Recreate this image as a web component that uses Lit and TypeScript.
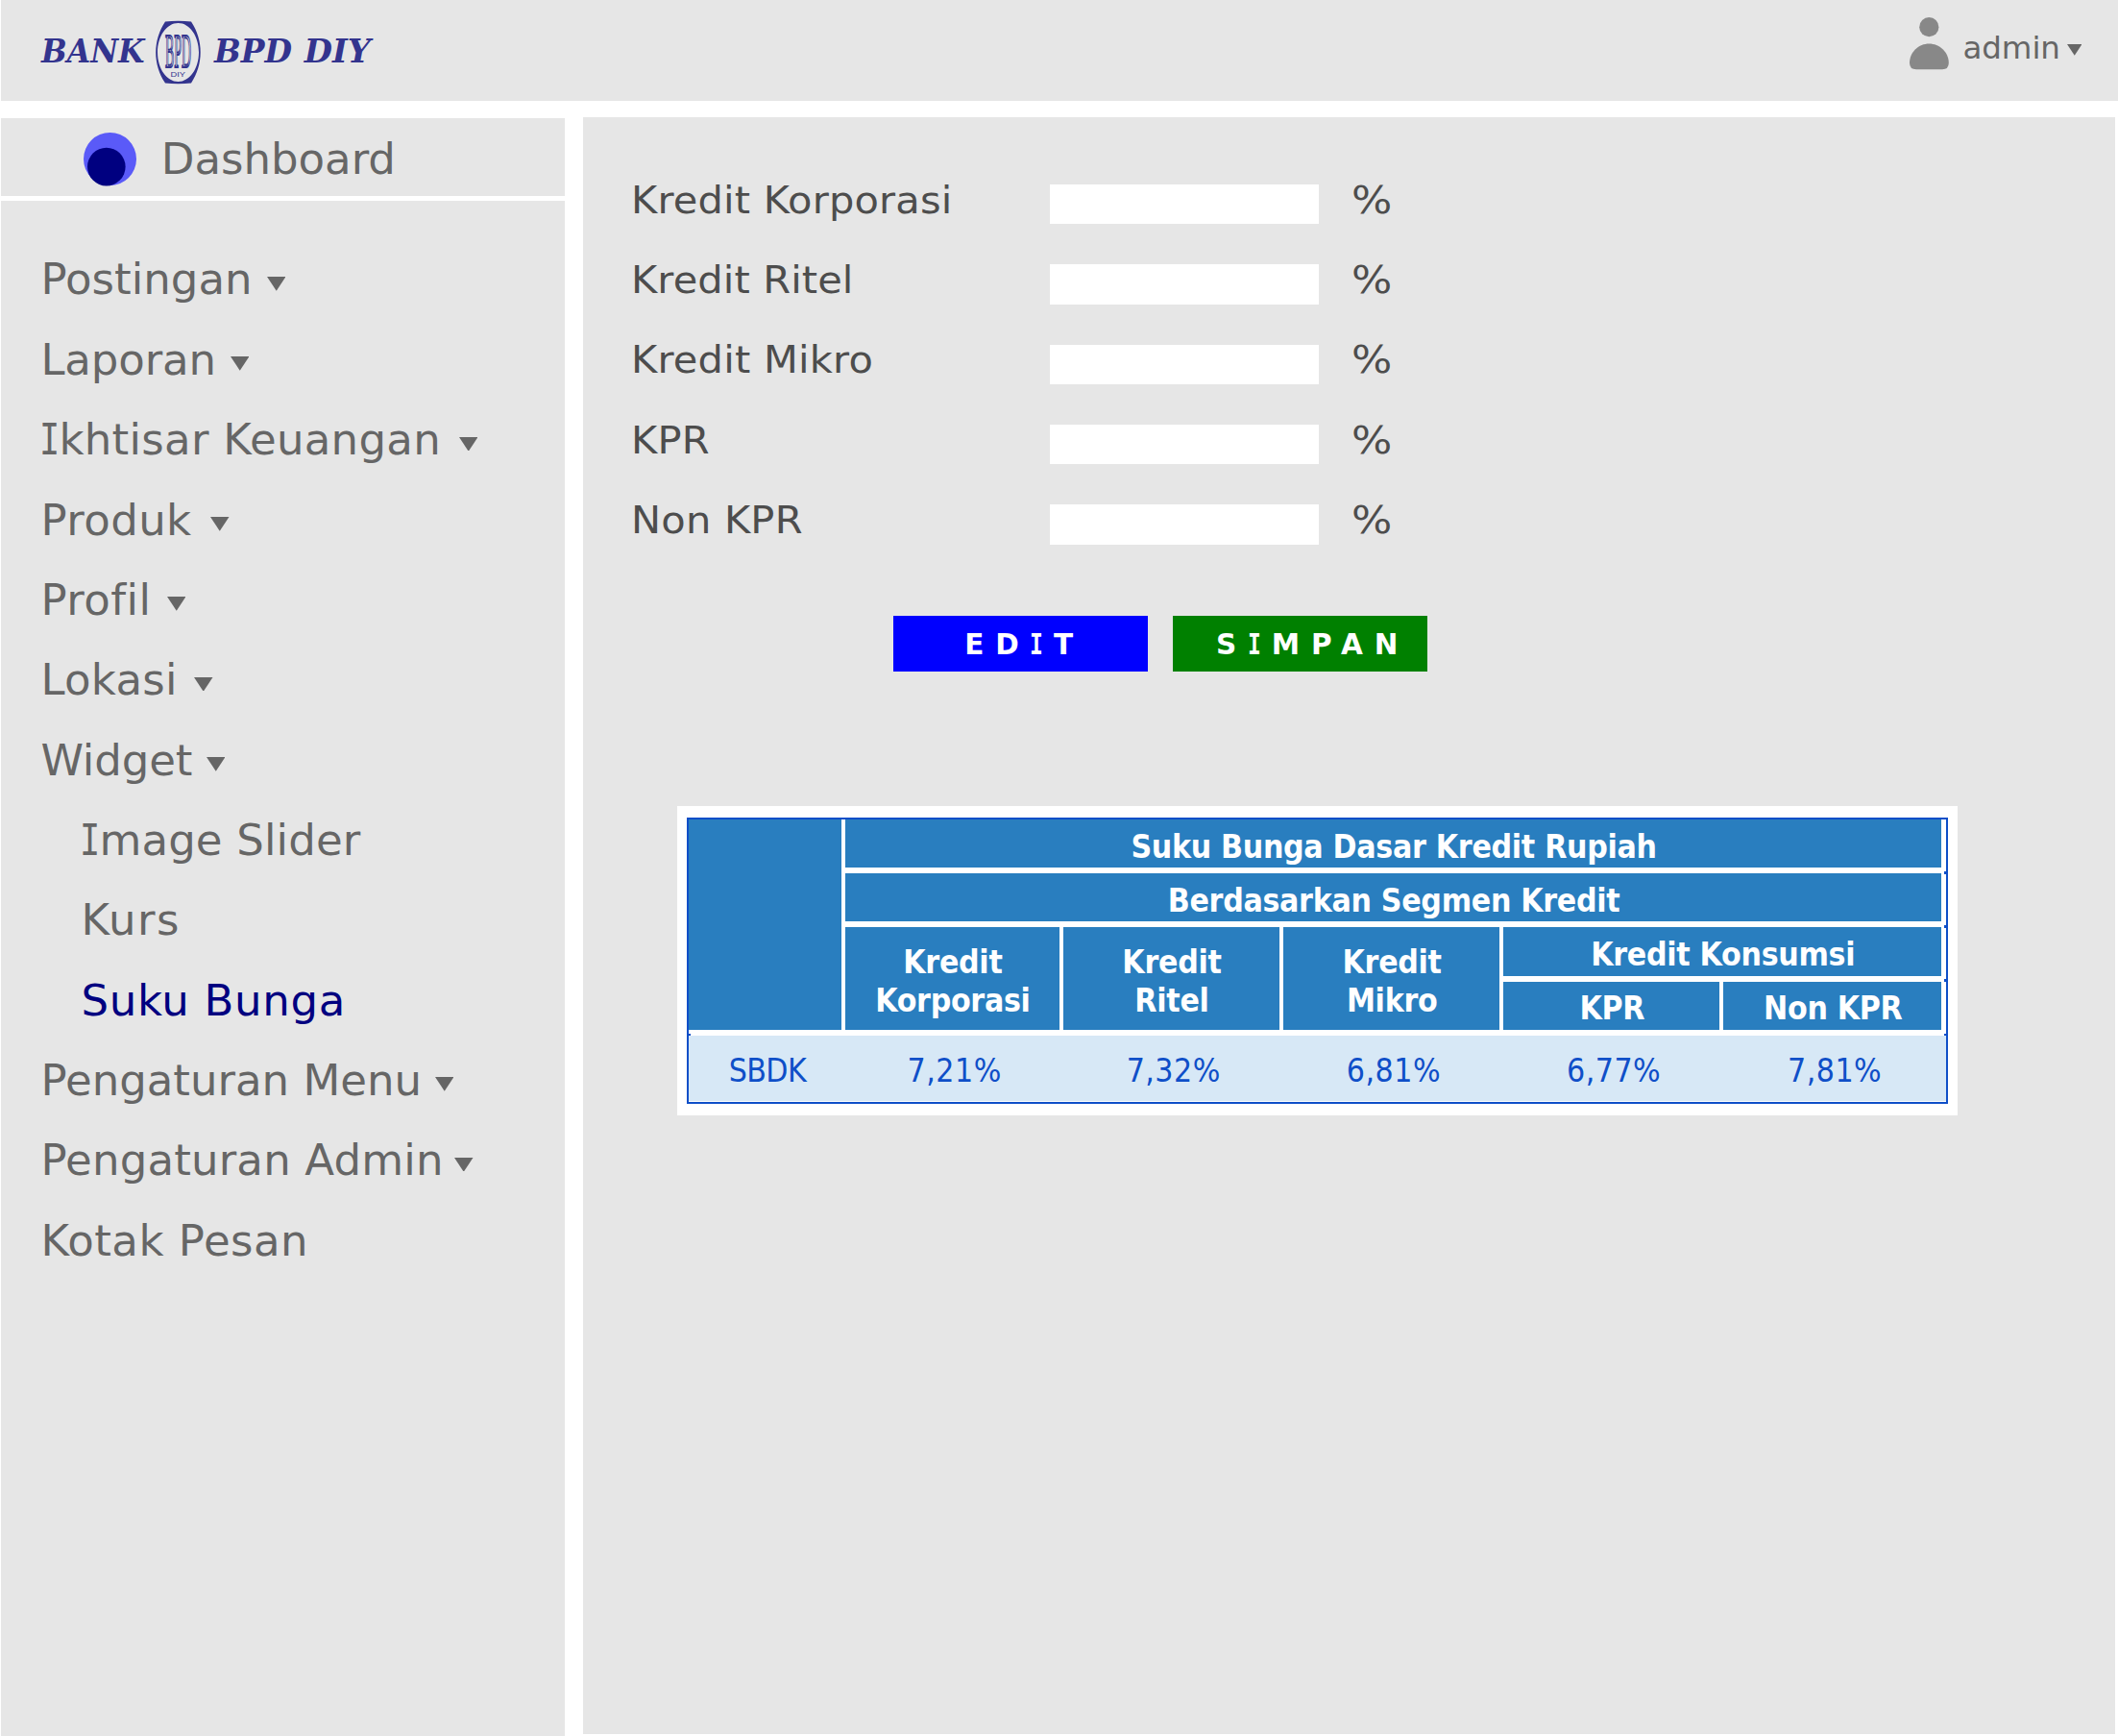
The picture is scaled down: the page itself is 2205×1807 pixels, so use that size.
import { LitElement, html, css } from "lit";

interface MenuItem {
  label: string;
  spacing: number;
  arrow?: number;
  sub?: boolean;
  active?: boolean;
}

const MENU: MenuItem[] = [
  { label: "Postingan", spacing: 0.05, arrow: 277.6 },
  { label: "Laporan", spacing: -0.12, arrow: 240 },
  { label: "Ikhtisar Keuangan", spacing: 0.3, arrow: 477.7 },
  { label: "Produk", spacing: 0.45, arrow: 219.5 },
  { label: "Profil", spacing: 0.47, arrow: 173.6 },
  { label: "Lokasi", spacing: 0.32, arrow: 202.5 },
  { label: "Widget", spacing: -0.1, arrow: 215 },
  { label: "Image Slider", spacing: 0.17, sub: true },
  { label: "Kurs", spacing: 1.4, sub: true },
  { label: "Suku Bunga", spacing: 0.7, sub: true, active: true },
  { label: "Pengaturan Menu", spacing: 0.01, arrow: 452.8 },
  { label: "Pengaturan Admin", spacing: 0.18, arrow: 473.3 },
  { label: "Kotak Pesan", spacing: 0.51 },
];

const FIELDS = [
  { label: "Kredit Korporasi", spacing: 0.17 },
  { label: "Kredit Ritel", spacing: 0.1 },
  { label: "Kredit Mikro", spacing: 0.2 },
  { label: "KPR", spacing: 0.2 },
  { label: "Non KPR", spacing: 0.2 },
];

const RATES = ["SBDK", "7,21%", "7,32%", "6,81%", "6,77%", "7,81%"];

/* Capital I is set with slab serifs throughout the interface. */
const slab = (text: string) =>
  text.split(/(I)/).filter(Boolean).map((p) => (p === "I" ? html`<span class="slab">I</span>` : p));

const arrow = (w: number, h: number) =>
  html`<svg class="arrow" width=${w} height=${h} viewBox="0 0 20 15" preserveAspectRatio="none">
    <path d="M0 0H20L10 15Z" fill="#666" />
  </svg>`;

class AppRoot extends LitElement {
  static styles = css`
    :host {
      display: block;
      width: 2205px;
      height: 1807px;
      overflow: hidden;
      background: #fff;
      font-family: "DejaVu Sans", Verdana, sans-serif;
      color: #666;
    }
    svg { display: block; flex: none; }
    .header {
      box-sizing: border-box;
      height: 105px;
      margin-left: 1px;
      padding-right: 38px;
      background: #e6e6e6;
      display: flex;
      justify-content: space-between;
    }
    .user { display: flex; align-items: flex-start; }
    .user-icon { margin-top: 17.6px; }
    .name {
      width: 108px;
      margin-left: 15px;
      font-size: 32.5px;
      line-height: 101.6px;
      letter-spacing: -0.1px;
    }
    .user .arrow { margin-top: 46px; }
    .body { display: flex; }
    .side { width: 587px; margin: 18px 0 0 1px; flex: none; }
    .dashboard {
      box-sizing: border-box;
      height: 80.6px;
      padding: 5.9px 0 0 86px;
      background: #e6e6e6;
      display: flex;
      align-items: center;
      gap: 25.8px;
      font-size: 45px;
      line-height: 60px;
    }
    .menu {
      box-sizing: border-box;
      height: 1598px;
      margin-top: 5.7px;
      padding: 40.2px 0 0 41.4px;
      background: #e6e6e6;
    }
    .item {
      height: 83.35px;
      display: flex;
      font-size: 45px;
      line-height: 83.35px;
      white-space: pre;
    }
    .item .arrow { margin-top: 38.4px; }
    .sub { padding-left: 42px; }
    .active { color: #000080; }
    .slab {
      display: inline-block;
      width: 0.602em;
      margin: 0 -0.09em;
      font-family: "DejaVu Sans Mono", monospace;
      letter-spacing: 0;
      transform: scaleX(0.78);
    }
    .main {
      box-sizing: border-box;
      width: 1595px;
      height: 1683.3px;
      margin: 17px 0 0 18.6px;
      padding: 44.8px 0 0 50.4px;
      background: #e6e6e6;
    }
    .field {
      height: 83.35px;
      display: grid;
      grid-template-columns: 436px 280.3px auto;
      align-items: center;
      font-size: 39.4px;
      line-height: 83.35px;
      color: #4d4d4d;
      white-space: pre;
    }
    .label { justify-self: start; transform: scaleX(1.055); transform-origin: left; }
    .input { height: 41.3px; margin-top: 8.6px; background: #fff; }
    .percent {
      justify-self: start;
      margin-left: 34px;
      transform: scaleX(1.13);
      transform-origin: left;
    }
    .actions { display: flex; gap: 26.5px; margin: 57.2px 0 0 273px; }
    .btn {
      box-sizing: border-box;
      width: 265px;
      height: 58.2px;
      padding-top: 1.7px;
      color: #fff;
      font-size: 29.5px;
      font-weight: bold;
      line-height: 58.2px;
      white-space: pre;
    }
    .edit { background: #0000ff; padding-left: 74.2px; letter-spacing: 11.9px; }
    .save { background: #008000; padding-left: 44.6px; letter-spacing: 12px; }
    .btn .slab { margin-right: 9.3px; }
    .card {
      box-sizing: border-box;
      width: 1332.4px;
      height: 322.3px;
      margin: 139.9px 0 0 48.4px;
      padding: 12px 9.8px;
      background: #fff;
    }
    .rates {
      --dot: linear-gradient(#0f4fc8, #0f4fc8);
      box-sizing: border-box;
      height: 298.7px;
      border: 2px solid #0f4fc8;
      background:
        var(--dot) right 0 top 54px / 2px 3px no-repeat,
        var(--dot) right 0 top 110px / 2px 3px no-repeat,
        var(--dot) right 0 top 166px / 2px 3px no-repeat,
        var(--dot) right 0 top 223px / 2px 3px no-repeat,
        var(--dot) left 0 top 223px / 2px 3px no-repeat,
        #fff;
      font-family: "DejaVu Sans Condensed", "DejaVu Sans", Tahoma, sans-serif;
      font-stretch: condensed;
      font-size: 33.5px;
      line-height: 39.8px;
      text-align: center;
    }
    .grid {
      display: grid;
      grid-template-columns: 158.8px 222.9px 225.2px 225.2px 225.2px 226.8px;
      column-gap: 4px;
    }
    .head {
      grid-template-rows: 50.4px 50.4px 50.3px 50.3px;
      row-gap: 5.9px;
      color: #fff;
      font-weight: bold;
      letter-spacing: -0.3px;
    }
    .cell {
      box-sizing: border-box;
      padding: 7.2px 0 0 1px;
      background: #297ebf;
      display: flex;
      align-items: center;
      justify-content: center;
    }
    .corner { grid-row: 1 / 5; }
    .wide { grid-column: 2 / 7; }
    .tall { grid-row: 3 / 5; }
    .pair { grid-column: 5 / 7; }
    .values {
      margin-top: 6px;
      height: 68.4px;
      background: #d7e8f6;
      color: #0f4fc8;
    }
    .value { padding: 17.2px 0 0 4.6px; letter-spacing: 0.5px; }
    .code { letter-spacing: -0.6px; }
  `;

  logo() {
    return html`<svg width="400" height="105" viewBox="1 0 400 105" fill="#33348e">
      <g font-family="DejaVu Serif" font-style="italic" font-weight="bold" font-size="34">
        <text x="43" y="65.3" textLength="107.500" lengthAdjust="spacingAndGlyphs">BANK</text>
        <text x="223" y="65.3" textLength="81" lengthAdjust="spacingAndGlyphs">BPD</text>
        <text x="316.7" y="65.3" textLength="69" lengthAdjust="spacingAndGlyphs">DIY</text>
      </g>
      <path
        fill-rule="evenodd"
        d="M172 22.500Q185.500 20.800 199 22.500C212 42 212 67 199 86.500Q185.500 88 172 86.500C159 67 159 42 172 22.500ZM185.500 24C173.500 24 164 37.700 164 54.500C164 71.300 173.500 85 185.500 85C197.500 85 207 71.300 207 54.500C207 37.700 197.500 24 185.500 24Z"
      />
      <text x="172" y="70" textLength="27" lengthAdjust="spacingAndGlyphs" fill="none" stroke="#33348e" stroke-width="2.200" font-family="Liberation Serif" font-size="50">BPD</text>
      <text x="177.500" y="79.500" textLength="15.500" lengthAdjust="spacingAndGlyphs" font-family="Liberation Sans" font-size="8">DIY</text>
    </svg>`;
  }

  menuItem(m: MenuItem) {
    const width = m.arrow ? `width:${m.arrow - 42.4}px` : "";
    return html`<div class="item ${m.sub ? "sub" : ""} ${m.active ? "active" : ""}"><span style=${`letter-spacing:${m.spacing}px;${width}`}>${slab(m.label)}</span>${m.arrow ? arrow(19.5, 14.8) : ""}</div>`;
  }

  render() {
    return html`
      <div class="header">
        ${this.logo()}
        <div class="user">
          <svg class="user-icon" width="41" height="55" viewBox="0 0 41 55" fill="#888">
            <circle cx="20.3" cy="10.2" r="10.1" />
            <path d="M20.300 27.400C31 27.400 40.800 36 40.800 47.500Q40.800 54.300 34 54.300H7Q0 54.300 0 47.500C0 36 9.600 27.400 20.300 27.400Z" />
          </svg>
          <span class="name">admin</span>
          ${arrow(15.5, 11.8)}
        </div>
      </div>
      <div class="body">
        <div class="side">
          <div class="dashboard">
            <svg width="55" height="56" viewBox="0 0 55 56">
              <circle cx="27.5" cy="27.500" r="27.500" fill="#5a5af8" />
              <circle cx="23.800" cy="35.600" r="19.800" fill="#000080" />
            </svg>
            <span>Dashboard</span>
          </div>
          <div class="menu">${MENU.map((m) => this.menuItem(m))}</div>
        </div>
        <div class="main">
          ${FIELDS.map(
            (f) => html`<div class="field"><span class="label" style=${`letter-spacing:${f.spacing}px`}>${f.label}</span><div class="input"></div><span class="percent">%</span></div>`
          )}
          <div class="actions">
            <div class="btn edit">${slab("EDIT")}</div>
            <div class="btn save">${slab("SIMPAN")}</div>
          </div>
          <div class="card">
            <div class="rates">
              <div class="grid head">
                <div class="cell corner"></div>
                <div class="cell wide">Suku Bunga Dasar Kredit Rupiah</div>
                <div class="cell wide">Berdasarkan Segmen Kredit</div>
                <div class="cell tall">Kredit<br />Korporasi</div>
                <div class="cell tall">Kredit<br />Ritel</div>
                <div class="cell tall">Kredit<br />Mikro</div>
                <div class="cell pair">Kredit Konsumsi</div>
                <div class="cell">KPR</div>
                <div class="cell">Non KPR</div>
              </div>
              <div class="grid values">
                ${RATES.map((r, i) => html`<div class="value ${i ? "" : "code"}">${r}</div>`)}
              </div>
            </div>
          </div>
        </div>
      </div>
    `;
  }
}
customElements.define("app-root", AppRoot);
